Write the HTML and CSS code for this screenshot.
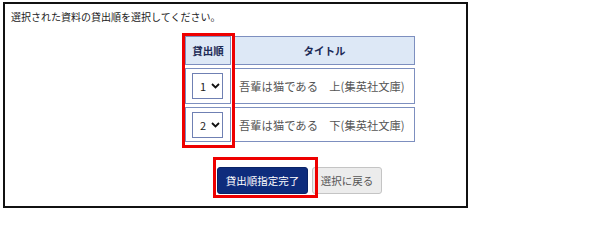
FILE: index.html
```html
<!DOCTYPE html>
<html lang="ja">
<head>
<meta charset="utf-8">
<link rel="stylesheet" href="styles.css">
</head>
<body>
<div class="frame">
  <p class="msg">選択された資料の貸出順を選択してください。</p>
  <table class="order">
    <thead>
      <tr><th class="col-no">貸出順</th><th class="col-title">タイトル</th></tr>
    </thead>
    <tbody>
      <tr class="row1">
        <td class="col-no"><div class="select"><span class="val">1</span><svg class="chev" width="9" height="6" viewBox="0 0 9 6"><path d="M1 1 L4.5 4.5 L8 1" fill="none" stroke="#111" stroke-width="1.8"/></svg></div></td>
        <td class="title">吾輩は猫である　上(集英社文庫)</td>
      </tr>
      <tr class="row2">
        <td class="col-no"><div class="select"><span class="val">2</span><svg class="chev" width="9" height="6" viewBox="0 0 9 6"><path d="M1 1 L4.5 4.5 L8 1" fill="none" stroke="#111" stroke-width="1.8"/></svg></div></td>
        <td class="title">吾輩は猫である　下(集英社文庫)</td>
      </tr>
    </tbody>
  </table>
  <div class="actions">
    <button class="btn primary">貸出順指定完了</button>
    <button class="btn secondary">選択に戻る</button>
  </div>
</div>
<div class="mark mark-col"></div>
<div class="mark mark-btn"></div>
</body>
</html>
```
FILE: styles.css
```css
html, body {
  margin: 0;
  padding: 0;
  background: #fff;
}
body {
  font-family: "Noto Sans CJK JP", "Noto Sans", sans-serif;
  font-size: 12px;
  color: #333;
  position: relative;
  width: 600px;
  height: 210px;
  overflow: hidden;
}
.frame {
  box-sizing: border-box;
  margin: 2px 0 0 3px;
  width: 465px;
  height: 206px;
  border: 2px solid #111;
  display: flex;
  flex-direction: column;
  align-items: flex-start;
}
.msg {
  margin: 0;
  padding: 5px 0 0 6px;
  font-size: 10px;
  line-height: 16px;
  color: #222;
}
.order {
  margin: 8px 0 0 177px;
  border-collapse: separate;
  border-spacing: 3px;
  table-layout: fixed;
}
.order th, .order td {
  border: 1px solid #7d8fbf;
  padding: 0;
  vertical-align: middle;
}
.order th {
  background: #dde8f6;
  color: #1c2a55;
  font-weight: bold;
  font-size: 10.5px;
  height: 27px;
  text-align: center;
}
.col-no {
  width: 44px;
}
.col-title {
  width: 179px;
}
.row1 td {
  height: 34px;
}
.row2 td {
  height: 33px;
}
.select {
  box-sizing: border-box;
  width: 31px;
  height: 26px;
  margin-left: 6px;
  border: 1px solid #6f80b3;
  background: #fff;
  display: flex;
  align-items: center;
  padding-left: 7px;
  gap: 5px;
  color: #222;
  font-size: 11px;
  line-height: 12px;
}
.chev {
  display: block;
}
.title {
  padding-left: 4px !important;
  color: #555;
  font-size: 11.3px;
  line-height: 14px;
  white-space: nowrap;
}
.actions {
  display: flex;
  gap: 4px;
  margin: 22px 0 0 212px;
}
.btn {
  box-sizing: border-box;
  height: 27px;
  font-family: "Noto Sans CJK JP", "Noto Sans", sans-serif;
  font-size: 10.5px;
  border-radius: 3px;
  padding: 0;
}
.primary {
  width: 91px;
  background: #0e2c7c;
  color: #fff;
  border: 1px solid #0a2366;
}
.secondary {
  width: 70px;
  background: #ececec;
  color: #555;
  border: 1px solid #c4c4c4;
}
.mark {
  position: absolute;
  box-sizing: border-box;
  border: 3px solid #ee0000;
}
.mark-col {
  left: 182px;
  top: 33px;
  width: 53px;
  height: 115px;
}
.mark-btn {
  left: 213px;
  top: 157px;
  width: 105px;
  height: 41px;
}
```
